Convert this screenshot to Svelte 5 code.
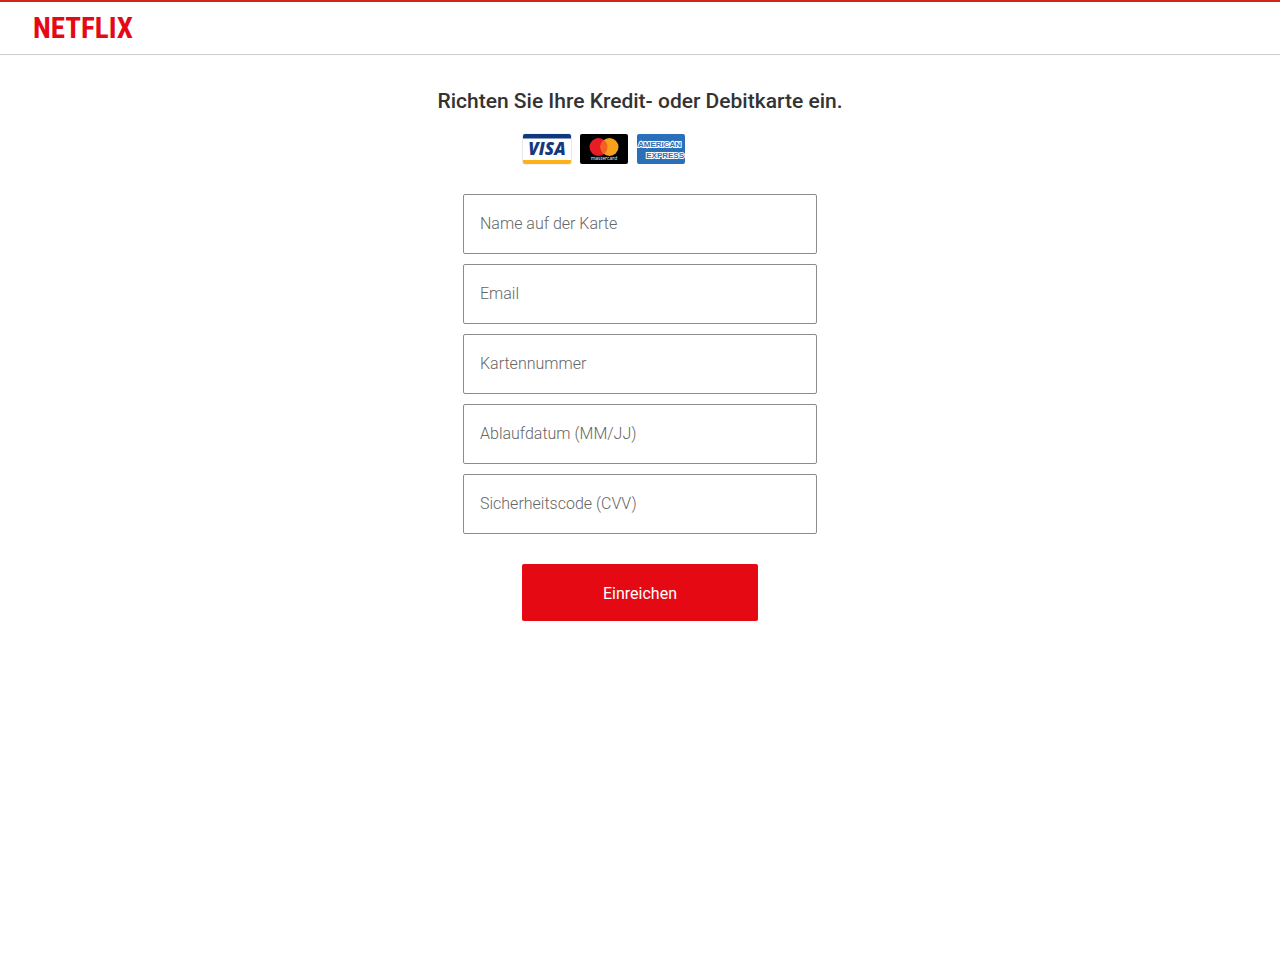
<script>
  const fields = [
    { id: 'name', label: 'Name auf der Karte', type: 'text', autocomplete: 'cc-name' },
    { id: 'email', label: 'Email', type: 'email', autocomplete: 'email' },
    { id: 'number', label: 'Kartennummer', type: 'text', autocomplete: 'cc-number' },
    { id: 'expiry', label: 'Ablaufdatum (MM/JJ)', type: 'text', autocomplete: 'cc-exp' },
    { id: 'cvv', label: 'Sicherheitscode (CVV)', type: 'text', autocomplete: 'cc-csc' }
  ];
</script>

<header>
  <a class="logo" href="/">NETFLIX</a>
</header>

<main>
  <h1>Richten Sie Ihre Kredit- oder Debitkarte ein.</h1>
  <form onsubmit={(e) => e.preventDefault()}>
    <div class="cards">
      <svg width="50" height="32" viewBox="0 0 50 32" role="img" aria-label="Visa">
        <rect x=".5" y="1" width="49" height="30" rx="2" fill="#fff" stroke="#e8e8e8" />
        <path d="M1 5.500V3a2 2 0 0 1 2-2h44a2 2 0 0 1 2 2v2.500z" fill="#10387f" />
        <path d="M1 27h48v2a2 2 0 0 1-2 2h-44a2 2 0 0 1-2-2z" fill="#fbb01c" />
        <text x="25" y="22" text-anchor="middle" class="visa">VISA</text>
      </svg>
      <svg width="50" height="32" viewBox="0 0 50 32" role="img" aria-label="Mastercard">
        <rect x="1" y="1" width="48" height="30" rx="2" fill="#000" />
        <circle cx="19.500" cy="14" r="9" fill="#e81c24" />
        <circle cx="30.500" cy="14" r="9" fill="#f89f1c" />
        <path d="M25 6.900a9 9 0 0 1 0 14.200a9 9 0 0 1 0-14.200z" fill="#f26122" />
        <text x="25" y="27" text-anchor="middle" class="mc">mastercard</text>
      </svg>
      <svg width="50" height="32" viewBox="0 0 50 32" role="img" aria-label="American Express">
        <rect x="1" y="1" width="48" height="30" rx="2" fill="#2a70b8" />
        <text x="2" y="14" class="amex">AMERICAN</text>
        <text x="48" y="25" text-anchor="end" class="amex">EXPRESS</text>
      </svg>
    </div>
    {#each fields as f}
      <input id={f.id} type={f.type} placeholder={f.label} aria-label={f.label} autocomplete={f.autocomplete} />
    {/each}
    <button type="submit">Einreichen</button>
  </form>
</main>

<style>
  :global(body) {
    background: #fff;
    font-family: Roboto, sans-serif;
  }
  header {
    display: flex;
    box-sizing: border-box;
    height: 55px;
    padding: 10px 33px;
    border-top: 2px solid #d0271d;
    border-bottom: 1px solid #ccc;
  }
  .logo {
    color: #e50914;
    font: bold 29px/32px "Roboto Condensed", "Liberation Sans Narrow", sans-serif;
    text-decoration: none;
  }
  main {
    display: flex;
    flex-direction: column;
    align-items: center;
    padding: 34px 16px;
  }
  h1 {
    margin: 0;
    color: #333;
    font-size: 21px;
    font-weight: 500;
    line-height: 24px;
    text-align: center;
  }
  form {
    display: flex;
    flex-direction: column;
    align-items: center;
    gap: 10px;
    width: 100%;
    max-width: 354px;
    margin-top: 20px;
  }
  .cards {
    display: flex;
    gap: 7px;
    width: 236px;
    margin-bottom: 19px;
  }
  .visa {
    fill: #15397f;
    font: italic 800 17px "Open Sans", sans-serif;
  }
  .mc {
    fill: #fff;
    font: 400 5px "Open Sans", sans-serif;
  }
  .amex {
    fill: #2a70b8;
    stroke: #fff;
    stroke-width: 2px;
    paint-order: stroke;
    font: bold 8px "Liberation Sans", sans-serif;
  }
  input {
    box-sizing: border-box;
    width: 100%;
    height: 60px;
    padding: 0 16px 2px;
    border: 1px solid #8c8c8c;
    border-radius: 2px;
    background: #fff;
    color: #333;
    font: 300 16px Roboto, sans-serif;
  }
  input::placeholder {
    color: #666;
    opacity: 1;
  }
  button {
    width: 236px;
    height: 57px;
    margin-top: 20px;
    padding: 2px 0 0;
    border: 0;
    border-radius: 2px;
    background: #e50914;
    color: #fff;
    font: 400 16px Roboto, sans-serif;
    cursor: pointer;
  }
</style>
